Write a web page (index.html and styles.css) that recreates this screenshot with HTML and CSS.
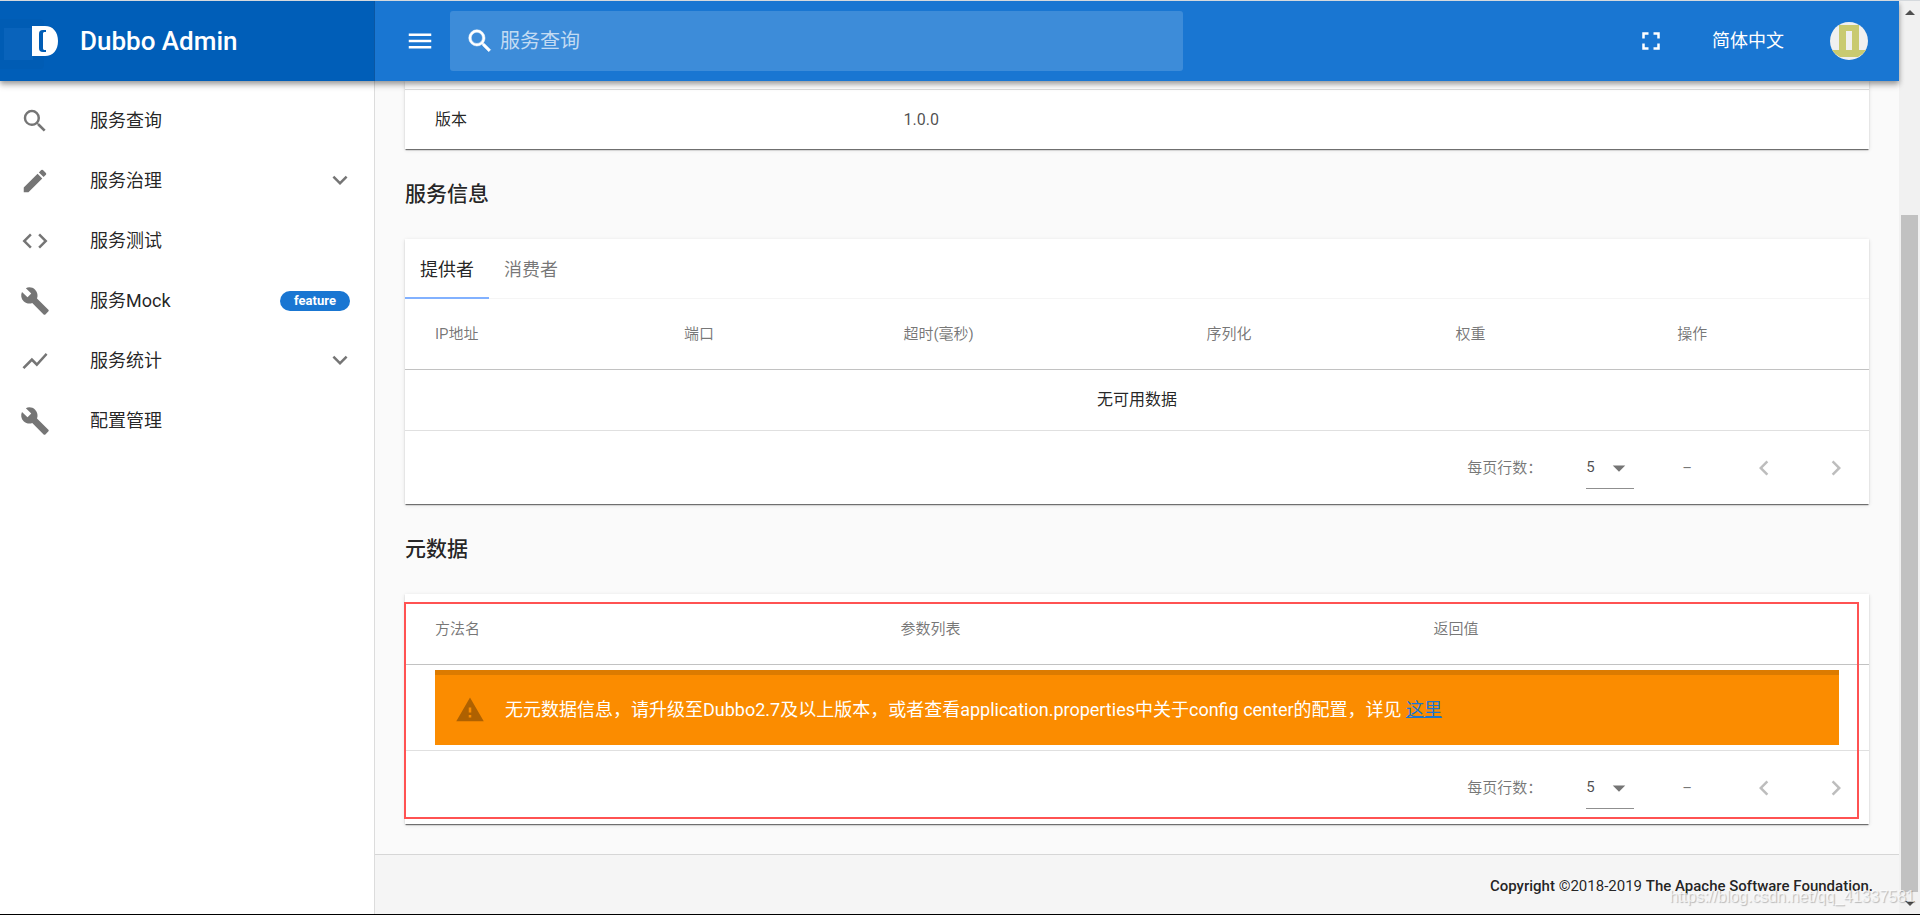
FILE: index.html
```html
<!DOCTYPE html>
<html lang="zh-CN">
<head>
	<meta charset="UTF-8">
	<meta name="viewport" content="width=device-width, initial-scale=1.0">
	<title>Dubbo Admin</title>
	<link rel="stylesheet" href="styles.css">
</head>
<body>
	<div class="app">
		<header class="header">
			<div class="brand">
				<svg class="logo" viewBox="0 0 26 30"><path fill="#fff" fill-rule="evenodd" d="M0 0h13c8 0 13 6 13 15s-5 15-13 15H0zM14 4h-3C8 4 7 5.500 7 8v14c0 2.500 1 4 4 4h3v-2h-1c-1.500 0-2-.5-2-2V8c0-1.500.5-2 2-2h1z"/></svg>
				<h1>Dubbo Admin</h1>
			</div>
			<div class="toolbar">
				<button class="icon-btn menu-btn" aria-label="菜单">
					<svg class="icon" viewBox="0 0 24 24"><path d="M3 18h18v-2H3v2zm0-5h18v-2H3v2zm0-7v2h18V6H3z"/></svg>
				</button>
				<label class="search">
					<svg class="icon" viewBox="0 0 24 24"><path stroke="currentColor" stroke-width=".4" d="M9.500 3A6.500 6.500 0 0 1 16 9.500c0 1.610-.59 3.090-1.560 4.230l.27.27h.79l5 5-1.500 1.500-5-5v-.79l-.27-.27A6.516 6.516 0 0 1 9.500 16a6.500 6.500 0 0 1 0-13m0 2C7 5 5 7 5 9.500S7 14 9.500 14 14 12 14 9.500 12 5 9.500 5z"/></svg>
					<input type="text" placeholder="服务查询" aria-label="服务查询">
				</label>
				<div class="actions">
					<button class="icon-btn" aria-label="全屏">
						<svg class="icon" viewBox="0 0 24 24"><path d="M7 14H5v5h5v-2H7v-3zm-2-4h2V7h3V5H5v5zm12 7h-3v2h5v-5h-2v3zM14 5v2h3v3h2V5h-5z"/></svg>
					</button>
					<button class="lang">简体中文</button>
					<button class="avatar" aria-label="用户">
						<svg viewBox="0 0 38 38"><circle cx="19" cy="19" r="19" fill="#f0f0f0"/><path fill="#c9ca70" fill-rule="evenodd" d="M9 3h20v25h7a19 19 0 0 1-8 7H10a19 19 0 0 1-8-7h7zM16 9v19h6V9z"/></svg>
					</button>
				</div>
			</div>
		</header>

		<div class="body">
			<nav class="sidebar">
				<a href="#" class="item">
					<svg class="icon" viewBox="0 0 24 24"><path d="M15.500 14h-.79l-.28-.27A6.471 6.471 0 0 0 16 9.500 6.500 6.500 0 1 0 9.500 16c1.610 0 3.090-.59 4.230-1.570l.27.28v.79l5 4.990L20.490 19l-4.990-5zm-6 0C7.010 14 5 11.990 5 9.500S7.010 5 9.500 5 14 7.010 14 9.500 11.990 14 9.500 14z"/></svg>
					<span>服务查询</span>
				</a>
				<a href="#" class="item">
					<svg class="icon" viewBox="0 0 24 24"><path d="M3 17.250V21h3.750L17.810 9.940l-3.750-3.750L3 17.250zM20.710 7.040a.996.996 0 0 0 0-1.410l-2.340-2.340a.996.996 0 0 0-1.410 0l-1.830 1.830 3.750 3.750 1.830-1.830z"/></svg>
					<span>服务治理</span>
					<svg class="arrow" viewBox="0 0 24 24"><path d="M7.410 7.840 12 12.420l4.590-4.580L18 9.250l-6 6-6-6z"/></svg>
				</a>
				<a href="#" class="item">
					<svg class="icon" viewBox="0 0 24 24"><path d="M9.400 16.600 4.800 12l4.600-4.600L8 6l-6 6 6 6 1.400-1.400zm5.200 0 4.600-4.600-4.600-4.600L16 6l6 6-6 6-1.400-1.400z"/></svg>
					<span>服务测试</span>
				</a>
				<a href="#" class="item">
					<svg class="icon" viewBox="0 0 24 24"><path d="m22.700 19-9.100-9.100c.9-2.300.4-5-1.500-6.900-2-2-5-2.400-7.400-1.300L9 6 6 9 1.600 4.700C.4 7.100.9 10.100 2.900 12.100c1.900 1.900 4.600 2.400 6.900 1.500l9.100 9.100c.4.4 1 .4 1.400 0l2.300-2.300c.5-.4.5-1.100.1-1.400z"/></svg>
					<span>服务Mock</span>
					<span class="badge">feature</span>
				</a>
				<a href="#" class="item">
					<svg class="icon" viewBox="0 0 24 24"><path d="m3.500 18.490 6-6.010 4 4L22 6.920l-1.410-1.410-7.090 7.970-4-4L2 16.990z"/></svg>
					<span>服务统计</span>
					<svg class="arrow" viewBox="0 0 24 24"><path d="M7.410 7.840 12 12.420l4.590-4.580L18 9.250l-6 6-6-6z"/></svg>
				</a>
				<a href="#" class="item">
					<svg class="icon" viewBox="0 0 24 24"><path d="m22.700 19-9.100-9.100c.9-2.300.4-5-1.500-6.900-2-2-5-2.400-7.400-1.300L9 6 6 9 1.600 4.700C.4 7.100.9 10.100 2.900 12.100c1.900 1.900 4.600 2.400 6.900 1.500l9.100 9.100c.4.4 1 .4 1.400 0l2.300-2.300c.5-.4.5-1.100.1-1.400z"/></svg>
					<span>配置管理</span>
				</a>
			</nav>

			<div class="page">
				<main class="content">
					<div class="card basic">
						<table>
							<tbody>
								<tr>
									<td>版本</td>
									<td class="value">1.0.0</td>
								</tr>
							</tbody>
						</table>
					</div>

					<h2>服务信息</h2>
					<div class="card">
						<div class="tabs">
							<button class="tab active">提供者</button>
							<button class="tab">消费者</button>
						</div>
						<table class="providers">
							<thead>
								<tr>
									<th>IP地址</th>
									<th>端口</th>
									<th>超时(毫秒)</th>
									<th>序列化</th>
									<th>权重</th>
									<th>操作</th>
								</tr>
							</thead>
							<tbody>
								<tr>
									<td colspan="6" class="empty">无可用数据</td>
								</tr>
							</tbody>
						</table>
						<div class="pager">
							<label for="rows-providers">每页行数：</label>
							<div class="select">
								<select id="rows-providers"><option>5</option><option>10</option></select>
								<svg viewBox="0 0 24 24"><path d="m7 10 5 5 5-5z"/></svg>
							</div>
							<span class="range">–</span>
							<button class="icon-btn" aria-label="上一页" disabled><svg class="icon" viewBox="0 0 24 24"><path d="M15.410 7.410 14 6l-6 6 6 6 1.410-1.410L10.830 12z"/></svg></button>
							<button class="icon-btn" aria-label="下一页" disabled><svg class="icon" viewBox="0 0 24 24"><path d="M10 6 8.590 7.410 13.170 12l-4.580 4.590L10 18l6-6z"/></svg></button>
						</div>
					</div>

					<h2>元数据</h2>
					<div class="card marked">
						<table class="metadata">
							<thead>
								<tr>
									<th>方法名</th>
									<th>参数列表</th>
									<th>返回值</th>
								</tr>
							</thead>
							<tbody>
								<tr>
									<td colspan="3" class="alert-cell">
										<div class="alert">
											<svg class="icon" viewBox="0 0 24 24"><path d="M1 21h22L12 2 1 21zm12-3h-2v-2h2v2zm0-4h-2v-4h2v4z"/></svg>
											<p>无元数据信息，请升级至Dubbo2.7及以上版本，或者查看application.properties中关于config center的配置，详见 <a href="#">这里</a></p>
										</div>
									</td>
								</tr>
							</tbody>
						</table>
						<div class="pager">
							<label for="rows-metadata">每页行数：</label>
							<div class="select">
								<select id="rows-metadata"><option>5</option><option>10</option></select>
								<svg viewBox="0 0 24 24"><path d="m7 10 5 5 5-5z"/></svg>
							</div>
							<span class="range">–</span>
							<button class="icon-btn" aria-label="上一页" disabled><svg class="icon" viewBox="0 0 24 24"><path d="M15.410 7.410 14 6l-6 6 6 6 1.410-1.410L10.830 12z"/></svg></button>
							<button class="icon-btn" aria-label="下一页" disabled><svg class="icon" viewBox="0 0 24 24"><path d="M10 6 8.590 7.410 13.170 12l-4.580 4.590L10 18l6-6z"/></svg></button>
						</div>
					</div>
				</main>
				<footer class="footer"><strong>Copyright</strong> ©2018-2019 <strong>The Apache Software Foundation.</strong></footer>
			</div>
		</div>
	</div>

	<div class="scrollbar">
		<svg viewBox="0 0 10 5"><path d="M0 5 5 0l5 5z"/></svg>
		<div class="thumb"></div>
		<svg viewBox="0 0 10 5"><path d="m0 0 5 5 5-5z"/></svg>
	</div>
	<span class="watermark">https://blog.csdn.net/qq_41337581</span>
</body>
</html>
```
FILE: styles.css
```css
* {
	box-sizing: border-box;
	padding: 0;
	margin: 0;
}

body {
	position: relative;
	display: flex;
	min-height: 100vh;
	border-top: 1px solid #d5d9dd;
	border-bottom: 1px solid #000;
	font-family: Roboto, "Noto Sans CJK SC", sans-serif;
	font-size: 16px;
	line-height: 24px;
	color: rgba(0, 0, 0, 0.87);
	background: #fafafa;
}

button,
input,
select {
	font: inherit;
	color: inherit;
	border: none;
	outline: none;
	background: none;
}

a {
	color: inherit;
	text-decoration: none;
}

.icon {
	display: block;
	flex: none;
	width: 30px;
	height: 30px;
	fill: currentColor;
}

.app {
	display: flex;
	flex-direction: column;
	flex: 1;
	min-width: 0;
}

/* Header */
.header {
	position: relative;
	z-index: 2;
	display: flex;
	height: 80px;
	color: #fff;
	background: #1976d2;
	box-shadow: 0 2px 5px rgba(0, 0, 0, 0.3), 0 5px 6px rgba(0, 0, 0, 0.16);
}

.brand {
	position: relative;
	display: flex;
	align-items: center;
	gap: 22px;
	width: 375px;
	padding-left: 32px;
	background: #005eb8;
	border-right: 1px solid #0b57a3;
}

.brand::before {
	content: "";
	position: absolute;
	left: 0;
	top: 18px;
	width: 29px;
	height: 32px;
	border: 9px solid #005cb4;
	border-left-width: 4px;
	border-right-width: 11px;
	border-radius: 0 4px 4px 0;
	background: #0963bb;
}

.logo {
	position: relative;
	width: 26px;
	height: 30px;
}

.brand h1 {
	font-size: 26px;
	font-weight: 500;
}

.toolbar {
	display: flex;
	align-items: center;
	flex: 1;
	padding: 0 31px 0 30px;
}

.icon-btn {
	display: block;
}

.search {
	display: flex;
	align-items: center;
	gap: 5px;
	flex: 0 1 733px;
	height: 60px;
	margin-left: 15px;
	padding: 0 15px;
	border-radius: 3px;
	background: rgba(255, 255, 255, 0.16);
}

.search input {
	flex: 1;
	font-size: 20px;
}

.search input::placeholder {
	color: rgba(255, 255, 255, 0.7);
}

.actions {
	display: flex;
	align-items: center;
	gap: 46px;
	margin-left: auto;
}

.lang {
	font-size: 18px;
}

.avatar,
.avatar svg {
	display: block;
	width: 38px;
	height: 38px;
}

/* Sidebar */
.body {
	display: flex;
	flex: 1;
}

.sidebar {
	flex: none;
	width: 375px;
	padding: 10px 0;
	background: #fff;
	border-right: 1px solid #dcdcdc;
}

.item {
	display: flex;
	align-items: center;
	gap: 40px;
	height: 60px;
	padding: 0 19px 0 20px;
	font-size: 18px;
}

.item .icon {
	color: #757575;
}

.arrow {
	width: 30px;
	height: 30px;
	margin-left: auto;
	fill: #757575;
}

.badge {
	width: 70px;
	height: 20px;
	margin: 0 5px 0 auto;
	border-radius: 10px;
	font-size: 13px;
	font-weight: 700;
	line-height: 20px;
	text-align: center;
	color: #fff;
	background: #1976d2;
}

/* Content */
.page {
	display: flex;
	flex-direction: column;
	flex: 1;
	min-width: 0;
}

.content {
	flex: 1;
	padding: 0 30px 30px;
}

.content h2 {
	padding: 30px 0;
	font-size: 21px;
	font-weight: 500;
	line-height: 30px;
}

.card {
	position: relative;
	background: #fff;
	box-shadow: 0 2px 1px -1px rgba(0, 0, 0, 0.4), 0 1px 1px rgba(0, 0, 0, 0.2), 0 1px 4px rgba(0, 0, 0, 0.12);
}

.basic {
	padding-top: 8px;
}

.basic table {
	border-top: 1px solid #dcdcdc;
}

.basic td {
	height: 59px;
}

table {
	width: 100%;
	table-layout: fixed;
	border-spacing: 0;
}

th,
td {
	padding: 0 30px;
	text-align: left;
}

th {
	height: 71px;
	border-bottom: 1px solid #c2c2c2;
	font-size: 15px;
	font-weight: 400;
	color: rgba(0, 0, 0, 0.54);
}

td {
	height: 60px;
}

.basic td:first-child {
	width: 32%;
}

.basic .value {
	color: rgba(0, 0, 0, 0.7);
}

.providers th:nth-child(1),
.providers th:nth-child(4) {
	width: 17%;
}

.providers th:nth-child(2) {
	width: 15%;
}

.providers th:nth-child(3) {
	width: 20.7%;
}

.metadata th:nth-child(1) {
	width: 31.8%;
}

.metadata th:nth-child(2) {
	width: 36.4%;
}

.empty {
	text-align: center;
}

.tabs {
	display: flex;
	height: 60px;
	border-bottom: 1px solid #f5f5f5;
}

.tab {
	padding: 4px 15px 0;
	height: 60px;
	border-bottom: 2px solid transparent;
	font-size: 18px;
	color: rgba(0, 0, 0, 0.54);
}

.tab.active {
	color: rgba(0, 0, 0, 0.87);
	border-color: #82b1ff;
}

.pager {
	display: flex;
	align-items: center;
	justify-content: flex-end;
	height: 74px;
	padding-right: 18px;
	border-top: 1px solid #e0e0e0;
	font-size: 15px;
	color: rgba(0, 0, 0, 0.54);
}

.select {
	position: relative;
	width: 48px;
	margin: 0 48px 0 44px;
}

.select select {
	width: 100%;
	height: 42px;
	border-bottom: 1px solid #8f8f8f;
	appearance: none;
	color: rgba(0, 0, 0, 0.7);
}

.select svg {
	position: absolute;
	right: 0;
	top: 6px;
	width: 30px;
	height: 30px;
	fill: #757575;
	pointer-events: none;
}

.pager .icon-btn {
	margin-left: 42px;
	color: #bdbdbd;
}

.pager .range + .icon-btn {
	margin-left: 57px;
}

/* Metadata warning */
.alert-cell {
	height: 85px;
}

.alert {
	display: flex;
	align-items: center;
	gap: 20px;
	height: 75px;
	padding: 0 20px;
	border-top: 5px solid #dc7b00;
	font-size: 18px;
	color: #fff;
	background: #fb8c00;
}

.alert .icon {
	color: rgba(0, 0, 0, 0.3);
}

.alert a {
	color: #1976d2;
	text-decoration: underline;
}

.marked::after {
	content: "";
	position: absolute;
	inset: 8px 10px 5px -1px;
	border: 2px solid #ff5252;
	pointer-events: none;
}

.footer {
	height: 60px;
	padding: 19px 26px;
	border-top: 1px solid #d6d6d6;
	font-size: 15px;
	text-align: right;
	background: #f5f5f5;
}

.footer strong {
	font-weight: 500;
}

.scrollbar {
	display: flex;
	flex-direction: column;
	align-items: center;
	width: 21px;
	padding: 9px 0 8px;
	background: #f1f1f1;
}

.scrollbar svg {
	width: 10px;
	height: 5px;
	fill: #505050;
}

.thumb {
	width: 17px;
	flex: 1;
	margin: 200px 0 9px;
	background: #c1c1c1;
}

.watermark {
	position: absolute;
	right: 5px;
	bottom: 5px;
	z-index: 3;
	font-family: "Liberation Sans", sans-serif;
	color: rgba(255, 255, 255, 0.7);
	text-shadow: 1px 1px 1px rgba(0, 0, 0, 0.25);
}
```
